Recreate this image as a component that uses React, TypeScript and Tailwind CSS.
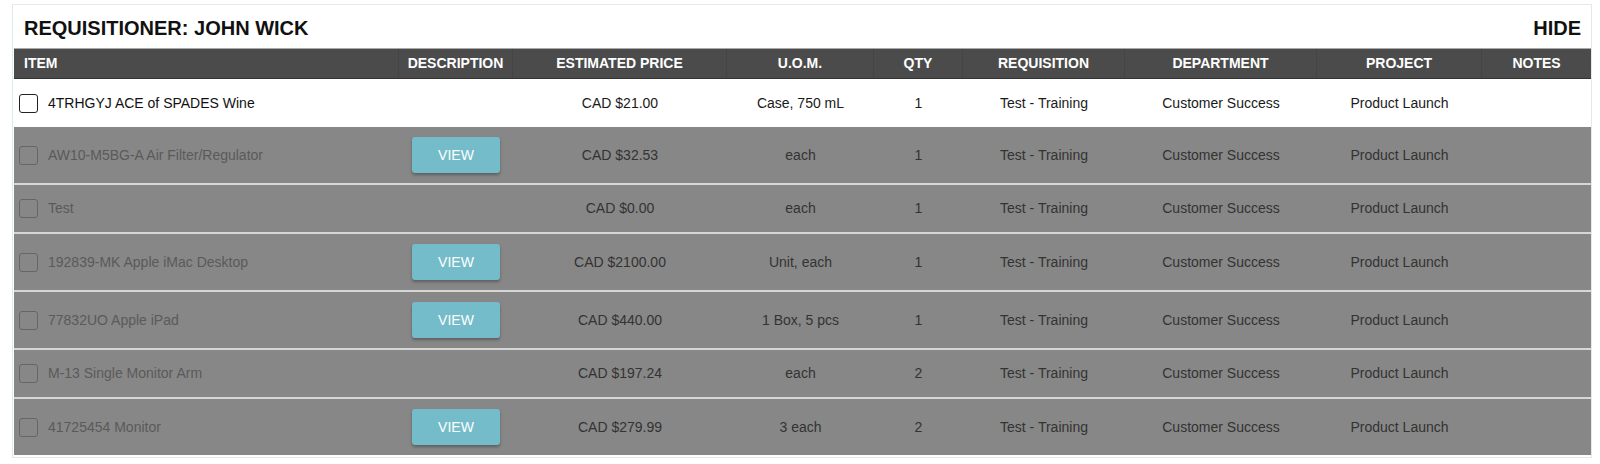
import React from "react";

type Row = {
  item: string;
  view: boolean;
  price: string;
  uom: string;
  qty: string;
  active?: boolean;
};

const rows: Row[] = [
  { item: "4TRHGYJ ACE of SPADES Wine", view: false, price: "CAD $21.00", uom: "Case, 750 mL", qty: "1", active: true },
  { item: "AW10-M5BG-A Air Filter/Regulator", view: true, price: "CAD $32.53", uom: "each", qty: "1" },
  { item: "Test", view: false, price: "CAD $0.00", uom: "each", qty: "1" },
  { item: "192839-MK Apple iMac Desktop", view: true, price: "CAD $2100.00", uom: "Unit, each", qty: "1" },
  { item: "77832UO Apple iPad", view: true, price: "CAD $440.00", uom: "1 Box, 5 pcs", qty: "1" },
  { item: "M-13 Single Monitor Arm", view: false, price: "CAD $197.24", uom: "each", qty: "2" },
  { item: "41725454 Monitor", view: true, price: "CAD $279.99", uom: "3 each", qty: "2" },
];

const grid =
  "grid grid-cols-[385px_114px_214px_147px_89px_162px_192px_165px_109px]";

export default function App() {
  return (
    <div className="w-[1600px] h-[464px] bg-white font-['Liberation_Sans',Arial,sans-serif] pt-1">
      <div className="ml-3 w-[1580px] border border-[#e1eaef] pl-px">
        <div className="flex h-[43px] items-start justify-between pt-[12px] pl-[10px] pr-[10px]">
          <span className="text-[20px] leading-[23px] font-bold text-[#111]">
            REQUISITIONER: JOHN WICK
          </span>
          <span className="text-[20px] leading-[23px] font-bold text-[#111]">HIDE</span>
        </div>
        <div
          className={`${grid} h-[31px] bg-[#4b4b4b] border-t border-t-[#a9a9a9] border-b border-b-[#333] text-white text-[14px] font-bold`}
        >
          <div className="flex items-center pl-[10px] border-r border-[#444]">ITEM</div>
          <div className="flex items-center justify-center border-r border-[#444]">DESCRIPTION</div>
          <div className="flex items-center justify-center border-r border-[#444]">ESTIMATED PRICE</div>
          <div className="flex items-center justify-center border-r border-[#444]">U.O.M.</div>
          <div className="flex items-center justify-center border-r border-[#444]">QTY</div>
          <div className="flex items-center justify-center border-r border-[#444]">REQUISITION</div>
          <div className="flex items-center justify-center border-r border-[#444]">DEPARTMENT</div>
          <div className="flex items-center justify-center border-r border-[#444]">PROJECT</div>
          <div className="flex items-center justify-center">NOTES</div>
        </div>
        {rows.map((r, i) => {
          const last = i === rows.length - 1;
          const rowCls = r.active
            ? "h-[48px] bg-white text-[#1a1a1a]"
            : `${r.view ? "h-[58px]" : "h-[49px]"} bg-[#878787] text-[#333] border-b-2 ${
                last ? "border-b-white" : "border-b-[#d6d6d6]"
              }`;
          return (
            <div key={i} className={`${grid} ${rowCls} text-[14px]`}>
              <div className="flex items-center pl-[5px]">
                <span
                  className={`w-[19px] h-[19px] rounded-[3px] border ${
                    r.active ? "border-[#222] bg-white" : "border-[#666]"
                  }`}
                />
                <span className={`ml-[10px] ${r.active ? "text-[#111]" : "text-[#5a5a5a]"}`}>
                  {r.item}
                </span>
              </div>
              <div className="flex items-center justify-center">
                {r.view && (
                  <button className="w-[88px] h-[36px] rounded-[3px] bg-[#74bcc9] text-white text-[14px] shadow-[0_2px_3px_rgba(0,0,0,0.3)]">
                    VIEW
                  </button>
                )}
              </div>
              <div className="flex items-center justify-center">{r.price}</div>
              <div className="flex items-center justify-center">{r.uom}</div>
              <div className="flex items-center justify-center">{r.qty}</div>
              <div className="flex items-center justify-center">Test - Training</div>
              <div className="flex items-center justify-center">Customer Success</div>
              <div className="flex items-center justify-center">Product Launch</div>
              <div />
            </div>
          );
        })}
      </div>
    </div>
  );
}
